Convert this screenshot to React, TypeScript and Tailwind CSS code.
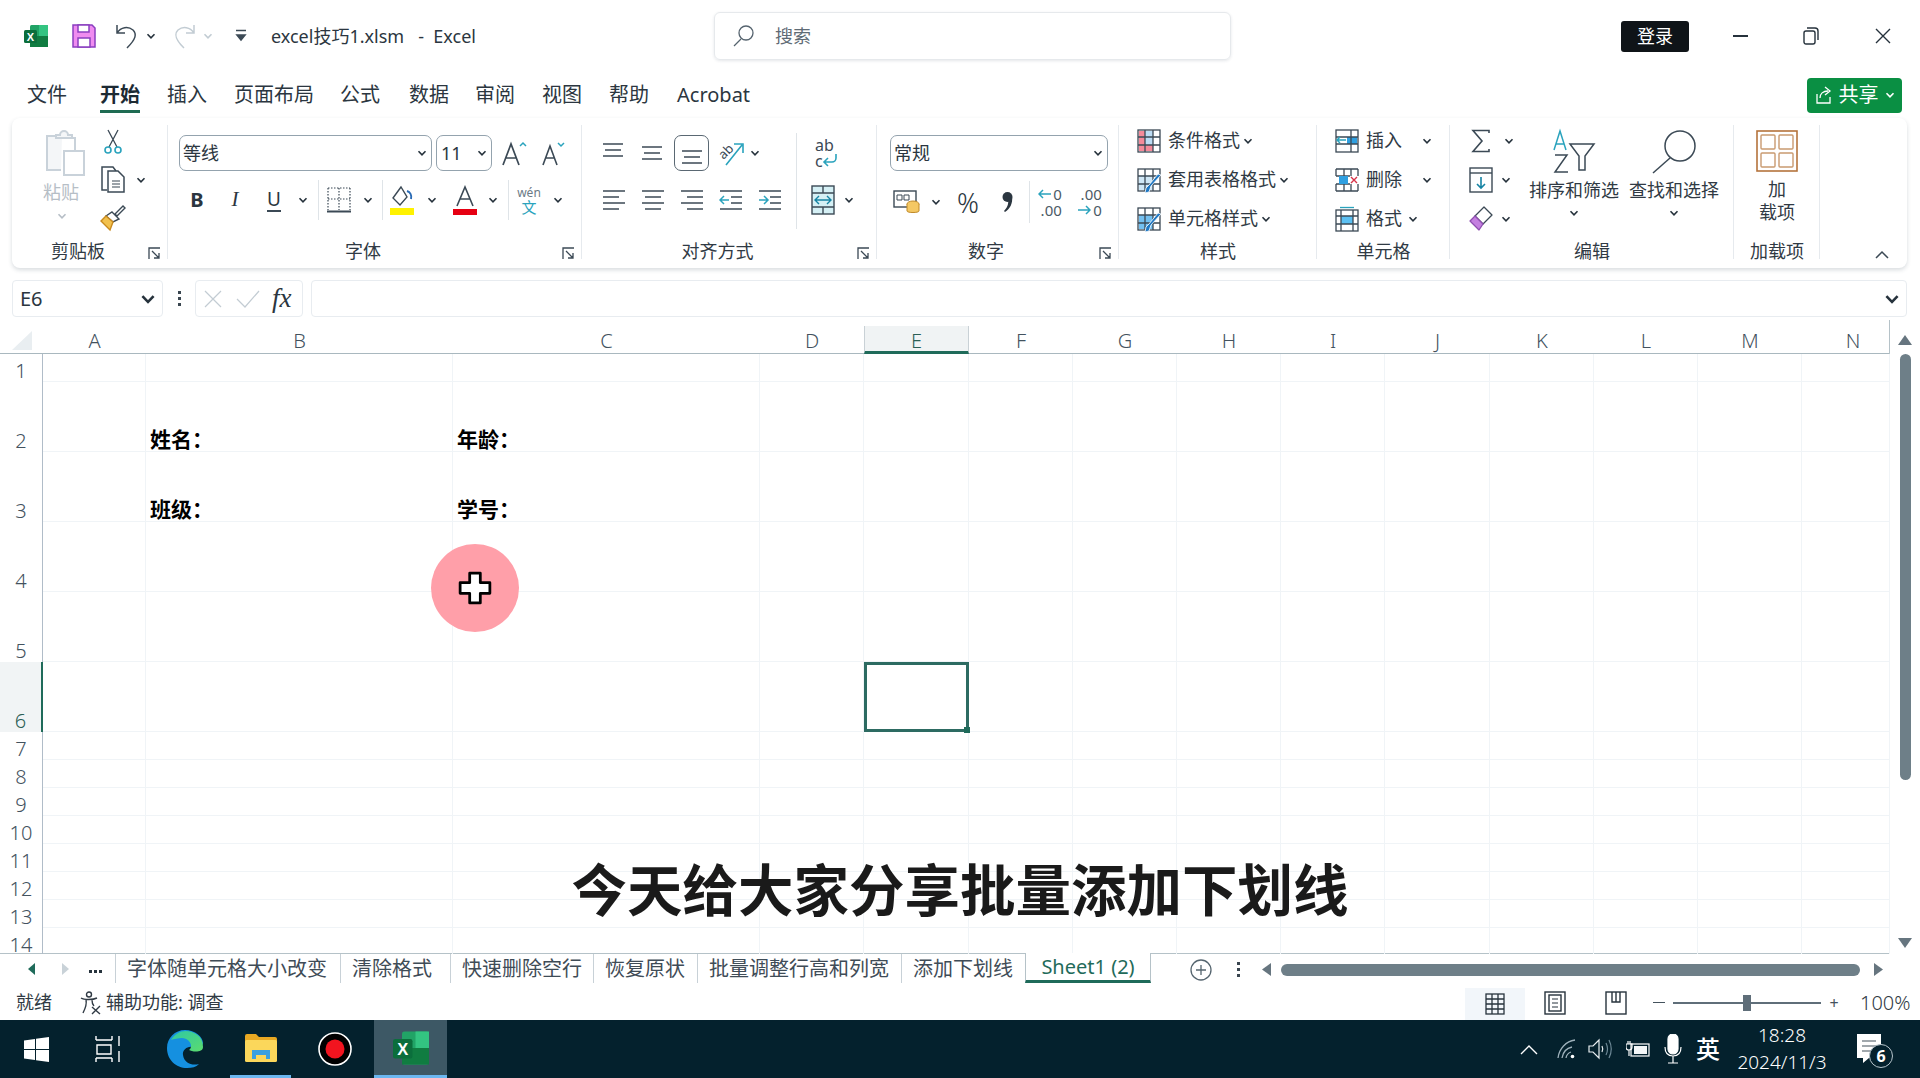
import type { ReactNode } from "react";

const ink = "#3b4955";
const teal = "#2aa3bd";

const colWidths = [43, 103, 307, 307, 104, 105, 104, 104, 104, 104, 105, 104, 104, 104, 88];
const colNames = ["", "A", "B", "C", "D", "E", "F", "G", "H", "I", "J", "K", "L", "M", "N"];
const rowHeights = [28, 70, 70, 70, 70, 70, 28, 28, 28, 28, 28, 28, 28, 28];
const tabs = [
  { name: "字体随单元格大小改变", w: "w-[225px]" },
  { name: "清除格式", w: "w-[110px]" },
  { name: "快速删除空行", w: "w-[143px]" },
  { name: "恢复原状", w: "w-[104px]" },
  { name: "批量调整行高和列宽", w: "w-[204px]" },
  { name: "添加下划线", w: "w-[124px]" },
];
const menus = [
  { name: "文件", ml: "ml-[27px]" },
  { name: "开始", ml: "ml-[33px]", active: true },
  { name: "插入", ml: "ml-[27px]" },
  { name: "页面布局", ml: "ml-[27px]" },
  { name: "公式", ml: "ml-[26px]" },
  { name: "数据", ml: "ml-[29px]" },
  { name: "审阅", ml: "ml-[26px]" },
  { name: "视图", ml: "ml-[27px]" },
  { name: "帮助", ml: "ml-[27px]" },
  { name: "Acrobat", ml: "ml-[28px]" },
];

function Slot({ w, children }: { w: string; children?: ReactNode }) {
  return <div className={`${w} flex shrink-0 items-center justify-center`}>{children}</div>;
}

function Chev({ color = "#26323c", size = 10 }: { color?: string; size?: number }) {
  return (
    <svg width={size} height={size} viewBox="0 0 10 10" fill="none" stroke={color} strokeWidth="1.6">
      <path d="M1.5 3.2 5 6.8l3.5-3.6" />
    </svg>
  );
}

function Launcher() {
  return (
    <svg width="13" height="13" viewBox="0 0 13 13" fill="none" stroke={ink} strokeWidth="1.3">
      <path d="M1 12V1h11" />
      <path d="M4 4l7 7M11 6v5H6" />
    </svg>
  );
}

function ExcelLogo({ size = 24 }: { size?: number }) {
  return (
    <svg width={size} height={size} viewBox="0 0 24 24">
      <rect x="6" y="1" width="18" height="22" rx="1.5" fill="#21a366" />
      <rect x="15" y="1" width="9" height="11" fill="#33c481" />
      <rect x="6" y="12" width="18" height="11" fill="#107c41" />
      <rect x="0" y="6" width="13" height="13" rx="1.5" fill="#0b6e3c" />
      <text x="6.5" y="16.5" textAnchor="middle" fontSize="11" fontWeight="700" fill="#fff" fontFamily="Liberation Sans">X</text>
    </svg>
  );
}

function AlignLines({ rows }: { rows: [number, number, number][] }) {
  return (
    <svg width="24" height="26" viewBox="0 0 24 26" stroke={ink} strokeWidth="1.5">
      {rows.map(([y, a, b]) => (
        <line key={y} x1={a} x2={b} y1={y} y2={y} />
      ))}
    </svg>
  );
}

function Group({
  w,
  label,
  launcher,
  children,
}: {
  w: string;
  label?: string;
  launcher?: boolean;
  children: ReactNode;
}) {
  return (
    <div className={`${w} relative flex h-full shrink-0 flex-col`}>
      <div className="h-[120px] shrink-0">{children}</div>
      {label && (
        <div className={launcher ? "pr-[24px] text-center text-[18px] leading-[26px] text-[#303a44]" : "text-center text-[18px] leading-[26px] text-[#303a44]"}>
          {label}
        </div>
      )}
      {launcher && (
        <div className="absolute right-[7px] bottom-[8px]">
          <Launcher />
        </div>
      )}
      <div className="absolute top-[7px] right-0 bottom-[9px] w-px bg-[#e6eaee]" />
    </div>
  );
}

function Select({ w, text, small }: { w: string; text: string; small?: boolean }) {
  return (
    <div className={`${w} flex h-[36px] shrink-0 items-center justify-between rounded-[7px] border border-[#94a3ae] pr-[4px] pl-[3px] text-[18px] text-[#2b3640]`}>
      <span className={small ? "pl-[1px]" : ""}>{text}</span>
      <Chev />
    </div>
  );
}

function StyleRow({ icon, text, chevMl }: { icon: ReactNode; text: string; chevMl: string }) {
  return (
    <div className="flex h-[39px] items-center text-[18px] text-[#303a44]">
      <div className="w-[24px] shrink-0">{icon}</div>
      <span className="ml-[7px] whitespace-nowrap">{text}</span>
      <div className={chevMl}>
        <Chev />
      </div>
    </div>
  );
}

function TableIcon({ fill, cond, brush }: { fill: string; cond?: boolean; brush?: boolean }) {
  return (
    <svg width="24" height="26" viewBox="0 0 24 26" fill="none" stroke={ink} strokeWidth="1.3">
      <rect x="1" y="2" width="22" height="22" />
      {cond ? (
        <>
          <path d="M2 3h6v20H2zM8 17h8v6H8z" fill="#f48a9a" stroke="none" />
          <rect x="8" y="3" width="8" height="14" fill="#bcdcf4" stroke="none" />
        </>
      ) : (
        <rect x="2" y="9" width="14" height="14" fill={fill} stroke="none" />
      )}
      <path d="M1 9h22M1 17h22M8 2v22M16 2v22" />
      {brush && <path d="M24 8 14 19l-2 6-4 1 1-5 3-3 9-11z" fill="#1f78c4" stroke="#fff" strokeWidth="0.8" />}
    </svg>
  );
}

function Ribbon() {
  return (
    <div className="mx-[12px] flex h-[150px] w-[1895px] rounded-[8px] bg-white shadow-[0_2px_4px_rgba(40,60,80,0.18)]">
      <Group w="w-[156px]" label="剪贴板" launcher>
        <div className="flex pl-[28px]">
          <div className="flex w-[50px] flex-col items-center pt-[12px] text-[18px] leading-[22px] text-[#b6bec6]">
            <svg width="42" height="46" viewBox="0 0 42 46" fill="none" stroke="#c9d2da" strokeWidth="2">
              <path d="M18 6h-15v34h14" fill="#f4f6f8" />
              <path d="M12 8V5h4a4 4 0 0 1 8 0h4v3z" fill="#f4f6f8" />
              <path d="M28 8h3v13" />
              <rect x="20" y="21" width="20" height="24" fill="#fff" />
            </svg>
            <span className="mt-[5px] -ml-[8px]">粘贴</span>
            <div className="mt-[8px] -ml-[6px]">
              <Chev color="#b6bec6" />
            </div>
          </div>
          <div className="ml-[10px] flex flex-col pt-[5px]">
            <div className="flex h-[38px] w-[26px] items-center justify-center">
              <svg width="18" height="26" viewBox="0 0 18 26" fill="none" stroke={ink} strokeWidth="1.3">
                <path d="M4 1l9 17M14 1 5 18" />
                <circle cx="4" cy="21" r="3" stroke={teal} strokeWidth="1.6" />
                <circle cx="14" cy="21" r="3" stroke={teal} strokeWidth="1.6" />
              </svg>
            </div>
            <div className="flex h-[38px] items-center">
              <div className="flex w-[26px] justify-center">
                <svg width="26" height="28" viewBox="0 0 26 28" fill="none" stroke={ink} strokeWidth="1.5">
                  <path d="M7 24H2V1h11l3 4" />
                  <path d="M8 5h10l6 6v15H8z" fill="#fff" />
                  <path d="M12 15h8M12 18h8M12 21h8" strokeWidth="1.1" />
                </svg>
              </div>
              <div className="ml-[10px]">
                <Chev />
              </div>
            </div>
            <div className="flex h-[38px] w-[26px] items-center justify-center">
              <svg width="26" height="28" viewBox="0 0 26 28">
                <path d="M15 10 23 2l2 2-8 8z" fill="#fff" stroke={ink} strokeWidth="1.4" />
                <path d="M12 8l7 7-6 3-7-6z" fill="#fff" stroke={ink} strokeWidth="1.4" />
                <path d="M6 12l7 6-3 8-9-9z" fill="#f2c14e" stroke="#c98a1e" strokeWidth="1.4" />
              </svg>
            </div>
          </div>
        </div>
      </Group>

      <Group w="w-[414px]" label="字体" launcher>
        <div className="flex items-center pt-[17px] pl-[11px]">
          <Select w="w-[253px]" text="等线" />
          <div className="ml-[4px]">
            <Select w="w-[56px]" text="11" small />
          </div>
          <Slot w="ml-[5px] w-[34px]">
            <svg width="30" height="30" viewBox="0 0 30 30" fill="none">
              <path d="M4 27 12 6l8 21M7 20h10" stroke={ink} strokeWidth="1.7" />
              <path d="M21 8l3-3 3 3" stroke={teal} strokeWidth="1.5" />
            </svg>
          </Slot>
          <Slot w="ml-[5px] w-[34px]">
            <svg width="26" height="30" viewBox="0 0 26 30" fill="none">
              <path d="M3 27l7-19 7 19M6 20h8" stroke={ink} strokeWidth="1.6" />
              <path d="M18 5l3 3 3-3" stroke={teal} strokeWidth="1.5" />
            </svg>
          </Slot>
        </div>
        <div className="mt-[11px] flex h-[36px] items-center pl-[11px]">
          <Slot w="w-[36px]">
            <span className="text-[20px] font-bold text-[#2b3640]">B</span>
          </Slot>
          <Slot w="ml-[2px] w-[36px]">
            <span className="font-['Liberation_Serif',serif] text-[21px] text-[#2b3640] italic">I</span>
          </Slot>
          <Slot w="ml-[3px] w-[36px]">
            <span className="border-b-2 border-[#3b4955] text-[19px] leading-[22px] text-[#2b3640]">U</span>
          </Slot>
          <Slot w="ml-px w-[20px]">
            <Chev />
          </Slot>
          <div className="ml-[5px] h-[40px] w-px shrink-0 bg-[#dfe4e8]" />
          <Slot w="ml-[4px] w-[32px]">
            <svg width="24" height="28" viewBox="0 0 24 28" fill="none" stroke={ink}>
              <path d="M1 2h22M1 2v22M23 2v22M12 2v22M1 13h22" strokeWidth="1.2" strokeDasharray="1.5 1.5" />
              <path d="M0 25.500h24" strokeWidth="2" />
            </svg>
          </Slot>
          <Slot w="ml-[3px] w-[20px]">
            <Chev />
          </Slot>
          <div className="ml-[4px] h-[40px] w-px shrink-0 bg-[#dfe4e8]" />
          <Slot w="ml-[4px] w-[32px]">
            <svg width="26" height="30" viewBox="0 0 26 30" fill="none">
              <path d="M11 2l-8 11 7 7 7-8z" stroke={ink} strokeWidth="1.4" />
              <path d="M17 6c3 1 5 4 4 8" stroke="#2a6bb5" strokeWidth="2" />
              <rect x="0" y="23" width="24" height="7" fill="#fff200" />
            </svg>
          </Slot>
          <Slot w="ml-[3px] w-[20px]">
            <Chev />
          </Slot>
          <Slot w="ml-[7px] w-[32px]">
            <svg width="26" height="30" viewBox="0 0 26 30" fill="none">
              <path d="M5 21 13 2l8 19M8 14h10" stroke={ink} strokeWidth="1.6" />
              <rect x="1" y="24" width="24" height="6" fill="#e60012" />
            </svg>
          </Slot>
          <Slot w="ml-[2px] w-[20px]">
            <Chev />
          </Slot>
          <div className="ml-[5px] h-[40px] w-px shrink-0 bg-[#dfe4e8]" />
          <Slot w="ml-[4px] w-[32px]">
            <div className="flex flex-col items-center text-[12px] leading-[14px] text-[#6b7a86]">
              <span>wén</span>
              <span className="text-[15px] text-[#2aa3bd]">文</span>
            </div>
          </Slot>
          <Slot w="ml-[3px] w-[20px]">
            <Chev />
          </Slot>
        </div>
      </Group>

      <Group w="w-[295px]" label="对齐方式" launcher>
        <div className="flex">
          <div className="w-[214px] shrink-0 pt-[17px]">
            <div className="flex h-[36px] items-center">
              <Slot w="ml-[13px] w-[36px]">
                <AlignLines rows={[[4, 2, 22], [10, 4, 20], [16, 2, 22]]} />
              </Slot>
              <Slot w="ml-[3px] w-[36px]">
                <AlignLines rows={[[7, 2, 22], [13, 4, 20], [19, 2, 22]]} />
              </Slot>
              <div className="ml-[4px] flex h-[36px] w-[35px] shrink-0 items-center justify-center rounded-[7px] border border-[#5a6873]">
                <AlignLines rows={[[11, 2, 22], [17, 4, 20], [23, 2, 22]]} />
              </div>
              <Slot w="ml-[6px] w-[32px]">
                <svg width="32" height="32" viewBox="0 0 32 32" fill="none">
                  <text x="4" y="20" fontSize="13" fill={ink} transform="rotate(-45 10 16)" fontFamily="Noto Sans">ab</text>
                  <path d="M11 28 27 8M19 7h9v9" stroke={teal} strokeWidth="1.6" />
                </svg>
              </Slot>
              <Slot w="w-[16px]">
                <Chev />
              </Slot>
            </div>
            <div className="mt-[11px] flex h-[36px] items-center pl-[12px]">
              <Slot w="w-[39px]">
                <AlignLines rows={[[4, 1, 23], [10, 1, 17], [16, 1, 23], [22, 1, 17]]} />
              </Slot>
              <Slot w="w-[39px]">
                <AlignLines rows={[[4, 1, 23], [10, 4, 20], [16, 1, 23], [22, 4, 20]]} />
              </Slot>
              <Slot w="w-[39px]">
                <AlignLines rows={[[4, 1, 23], [10, 7, 23], [16, 1, 23], [22, 7, 23]]} />
              </Slot>
              <Slot w="w-[39px]">
                <svg width="24" height="26" viewBox="0 0 24 26" fill="none">
                  <path d="M1 4h22M12 10h11M12 16h11M1 22h22" stroke={ink} strokeWidth="1.5" />
                  <path d="M10 13H1M5 9l-4 4 4 4" stroke={teal} strokeWidth="1.5" />
                </svg>
              </Slot>
              <Slot w="w-[39px]">
                <svg width="24" height="26" viewBox="0 0 24 26" fill="none">
                  <path d="M1 4h22M12 10h11M12 16h11M1 22h22" stroke={ink} strokeWidth="1.5" />
                  <path d="M1 13h9M6 9l4 4-4 4" stroke={teal} strokeWidth="1.5" />
                </svg>
              </Slot>
            </div>
          </div>
          <div className="mt-[15px] h-[96px] w-px shrink-0 bg-[#dfe4e8]" />
          <div className="w-[60px] shrink-0 pt-[17px]">
            <div className="flex h-[36px] items-center justify-center pr-[7px]">
              <svg width="30" height="36" viewBox="0 0 30 36" fill="none">
                <text x="6" y="16" fontSize="16" fill={ink} fontFamily="Noto Sans">ab</text>
                <text x="6" y="32" fontSize="16" fill={ink} fontFamily="Noto Sans">c</text>
                <path d="M27 19v4a4 4 0 0 1-4 4h-7M19 23l-4 4 4 4" stroke={teal} strokeWidth="1.6" />
              </svg>
            </div>
            <div className="mt-[11px] flex h-[36px] items-center pl-[14px]">
              <svg width="24" height="30" viewBox="0 0 24 30" fill="none" stroke={ink} strokeWidth="1.4">
                <rect x="1" y="1" width="22" height="28" fill="#d5f0f5" />
                <path d="M1 8h22M1 22h22M12 1v7M12 22v7" />
                <path d="M4 15h16M8 11l-4 4 4 4M16 11l4 4-4 4" stroke="#1583a3" />
              </svg>
              <div className="ml-[9px]">
                <Chev />
              </div>
            </div>
          </div>
        </div>
      </Group>

      <Group w="w-[242px]" label="数字" launcher>
        <div className="pt-[17px] pl-[13px]">
          <Select w="w-[218px]" text="常规" />
        </div>
        <div className="mt-[11px] flex h-[40px] items-center pl-[3px]">
          <Slot w="ml-[13px] w-[28px]">
            <svg width="28" height="26" viewBox="0 0 28 26" fill="none">
              <rect x="1" y="2" width="22" height="16" fill="#fff" stroke={ink} strokeWidth="1.4" />
              <path d="M4 6h5v5H4zM11 6h5v5h-5z" stroke={ink} strokeWidth="1" />
              <ellipse cx="20" cy="15" rx="6" ry="3" fill="#f4c864" stroke="#c08a28" />
              <path d="M14 15v7c0 2 12 2 12 0v-7" fill="#f4c864" stroke="#c08a28" />
            </svg>
          </Slot>
          <Slot w="ml-[8px] w-[14px]">
            <Chev />
          </Slot>
          <Slot w="ml-[7px] w-[36px]">
            <span className="text-[27px] leading-none font-light text-[#2b3640]">%</span>
          </Slot>
          <Slot w="ml-[4px] w-[36px]">
            <svg width="12" height="22" viewBox="0 0 12 22" fill="#2b3640">
              <circle cx="5.500" cy="6" r="5" />
              <path d="M10 6c1 6-2 12-7 15l-1-1c3-3 5-7 4-12z" />
            </svg>
          </Slot>
          <div className="ml-[3px] h-[42px] w-px shrink-0 bg-[#dfe4e8]" />
          <Slot w="ml-[2px] w-[36px]">
            <div className="flex flex-col items-end text-[15px] leading-[16px] text-[#4b5a66]">
              <div className="flex items-center gap-[2px]">
                <svg width="13" height="10" viewBox="0 0 13 10" fill="none" stroke={teal} strokeWidth="1.5">
                  <path d="M13 5H1M5 1 1 5l4 4" />
                </svg>
                <span>0</span>
              </div>
              <span>.00</span>
            </div>
          </Slot>
          <Slot w="ml-[4px] w-[36px]">
            <div className="flex flex-col items-end text-[15px] leading-[16px] text-[#4b5a66]">
              <span>.00</span>
              <div className="flex items-center gap-[2px]">
                <svg width="13" height="10" viewBox="0 0 13 10" fill="none" stroke={teal} strokeWidth="1.5">
                  <path d="M0 5h12M8 1l4 4-4 4" />
                </svg>
                <span>0</span>
              </div>
            </div>
          </Slot>
        </div>
      </Group>

      <Group w="w-[198px]" label="样式">
        <div className="pt-[3px] pl-[18px]">
          <StyleRow icon={<TableIcon fill="#f48a9a" cond />} text="条件格式" chevMl="ml-[3px]" />
          <StyleRow icon={<TableIcon fill="#cfe7f6" brush />} text="套用表格格式" chevMl="ml-[3px]" />
          <StyleRow icon={<TableIcon fill="#74c0f0" brush />} text="单元格样式" chevMl="ml-[3px]" />
        </div>
      </Group>

      <Group w="w-[133px]" label="单元格">
        <div className="pt-[3px] pl-[18px]">
          <StyleRow
            icon={
              <svg width="24" height="24" viewBox="0 0 24 24" fill="none" stroke={ink} strokeWidth="1.3">
                <rect x="1" y="1" width="22" height="22" />
                <rect x="12" y="8" width="10" height="7" fill="#2f9fe0" stroke="none" />
                <path d="M1 8h22M1 15h22M16 1v22" />
                <path d="M11 11H2M5 8l-3 3 3 3" stroke={teal} strokeWidth="1.5" />
              </svg>
            }
            text="插入"
            chevMl="ml-[20px]"
          />
          <StyleRow
            icon={
              <svg width="24" height="24" viewBox="0 0 24 24" fill="none" stroke={ink} strokeWidth="1.3">
                <path d="M1 1h22M1 23h22M1 1v7M1 16v7M9 1v7M9 16v7M16 1v7M16 16v7M23 1v7M23 16v7M1 8h14M1 16h14" />
                <rect x="4" y="8" width="9" height="8" fill="#2f9fe0" stroke="none" />
                <path d="M16 9l6 6M22 9l-6 6" stroke="#d8344a" strokeWidth="1.4" />
              </svg>
            }
            text="删除"
            chevMl="ml-[20px]"
          />
          <StyleRow
            icon={
              <svg width="24" height="26" viewBox="0 0 24 26" fill="none" stroke={ink} strokeWidth="1.3">
                <path d="M5 1.500h14" stroke={teal} />
                <rect x="1" y="4" width="22" height="21" />
                <rect x="6" y="10" width="12" height="8" fill="#5cc0f2" stroke="none" />
                <path d="M1 10h22M1 18h22M6 4v21M18 4v21" />
              </svg>
            }
            text="格式"
            chevMl="ml-[6px]"
          />
        </div>
      </Group>

      <Group w="w-[284px]" label="编辑">
        <div className="flex">
          <div className="w-[79px] shrink-0 pt-[3px] pl-[15px]">
            <div className="flex h-[39px] items-center">
              <Slot w="w-[32px]">
                <svg width="20" height="24" viewBox="0 0 20 24" fill="none" stroke={ink} strokeWidth="1.6">
                  <path d="M18 4V1.500H2L11 12 2 22.500h16V20" />
                </svg>
              </Slot>
              <Slot w="ml-[5px] w-[14px]">
                <Chev />
              </Slot>
            </div>
            <div className="flex h-[39px] items-center">
              <Slot w="w-[32px]">
                <svg width="24" height="26" viewBox="0 0 24 26" fill="none" stroke={ink} strokeWidth="1.4">
                  <rect x="1" y="1" width="22" height="24" />
                  <path d="M1 6h22" />
                  <path d="M12 10v11M8 17l4 4 4-4" stroke="#1583a3" strokeWidth="1.6" />
                </svg>
              </Slot>
              <Slot w="ml-[2px] w-[14px]">
                <Chev />
              </Slot>
            </div>
            <div className="flex h-[39px] items-center">
              <Slot w="w-[32px]">
                <svg width="24" height="26" viewBox="0 0 24 26" strokeLinejoin="round">
                  <path d="M15 1l8 8-9 9-8-8z" fill="#fff" stroke={ink} strokeWidth="1.3" />
                  <path d="M6 10l8 8-4 6-9-9z" fill="#c47fe0" stroke="#8e4eb0" strokeWidth="1.3" />
                </svg>
              </Slot>
              <Slot w="ml-[2px] w-[14px]">
                <Chev />
              </Slot>
            </div>
          </div>
          <div className="flex w-[90px] shrink-0 flex-col items-center pt-[10px] text-[18px] leading-[22px] whitespace-nowrap text-[#303a44]">
            <svg width="44" height="46" viewBox="0 0 44 46" fill="none">
              <path d="M2 22 8 3l6 19M4 16h8" stroke={teal} strokeWidth="1.5" />
              <path d="M3 27h12L3 44h13" stroke={ink} strokeWidth="1.5" />
              <path d="M18 16h24l-9 12v14h-6V28z" stroke={ink} strokeWidth="1.5" />
            </svg>
            <span className="mt-[5px]">排序和筛选</span>
            <div className="mt-[7px]">
              <Chev />
            </div>
          </div>
          <div className="ml-[10px] flex w-[90px] shrink-0 flex-col items-center pt-[12px] text-[18px] leading-[22px] whitespace-nowrap text-[#303a44]">
            <svg width="46" height="44" viewBox="0 0 46 44" fill="none" stroke={ink} strokeWidth="1.5">
              <ellipse cx="29" cy="16" rx="15" ry="15" />
              <path d="M19 28 2 43" />
            </svg>
            <span className="mt-[5px]">查找和选择</span>
            <div className="mt-[7px]">
              <Chev />
            </div>
          </div>
        </div>
      </Group>

      <Group w="w-[86px]" label="加载项">
        <div className="flex flex-col items-center pt-[12px] text-[18px] leading-[23px] text-[#303a44]">
          <svg width="42" height="42" viewBox="0 0 42 42" fill="none">
            <rect x="1" y="1" width="40" height="40" stroke="#b5733c" strokeWidth="1.6" />
            <rect x="5" y="5" width="14" height="14" rx="1" stroke="#c99a70" strokeWidth="1.4" />
            <rect x="23" y="5" width="14" height="14" rx="1" stroke="#c99a70" strokeWidth="1.4" />
            <rect x="5" y="23" width="14" height="14" rx="1" stroke="#c99a70" strokeWidth="1.4" />
            <rect x="23" y="23" width="14" height="14" rx="1" stroke="#c99a70" strokeWidth="1.4" />
          </svg>
          <span className="mt-[6px]">加</span>
          <span>载项</span>
        </div>
      </Group>

      <div className="flex flex-1 items-end justify-end pr-[18px] pb-[9px]">
        <svg width="14" height="9" viewBox="0 0 14 9" fill="none" stroke={ink} strokeWidth="1.5">
          <path d="M1 8l6-6 6 6" />
        </svg>
      </div>
    </div>
  );
}

function Sheet() {
  return (
    <div className="mt-[3px] flex h-[634px] shrink-0 overflow-hidden">
      <div className="w-[1890px] shrink-0 border-r border-b border-[#b5c2c8]">
        <div className="flex h-[34px] items-end border-b border-[#a9b8bf] text-[20px] leading-[24px] font-light text-[#43525e]">
          {colNames.map((name, c) => (
            <div
              key={c}
              style={{ width: colWidths[c] }}
              className={
                name === "E"
                  ? "-mb-px flex h-[28px] shrink-0 items-center justify-center border-x border-b-[3px] border-x-[#c9d1d6] border-b-[#1f6b5a] bg-[#f0f3f4] pt-[5px] text-[#2b5f55]"
                  : name === "N"
                    ? "flex h-[26px] shrink-0 items-center justify-center pt-[2px] pl-[14px]"
                    : c === 0
                      ? "flex h-[24px] shrink-0 items-center justify-center"
                      : "flex h-[26px] shrink-0 items-center justify-center pt-[2px]"
              }
            >
              {c === 0 ? (
                <svg width="22" height="20" viewBox="0 0 22 20" className="ml-[2px]">
                  <path d="M20 0v19H0z" fill="#e9eef1" />
                </svg>
              ) : (
                name
              )}
            </div>
          ))}
        </div>
        {rowHeights.map((h, r) => (
          <div key={r} style={{ height: h }} className="flex overflow-visible">
            {colWidths.map((w, c) => {
              const selected = r === 5 && c === 5;
              const rowHead = c === 0;
              let text = "";
              if (r === 1 && c === 2) text = "姓名：";
              if (r === 1 && c === 3) text = "年龄：";
              if (r === 2 && c === 2) text = "班级：";
              if (r === 2 && c === 3) text = "学号：";
              return (
                <div
                  key={c}
                  style={{ width: w }}
                  className={
                    rowHead
                      ? r === 5
                        ? "flex shrink-0 items-end justify-center border-r-[2px] border-r-[#1f6b5a] bg-[#f1f4f5] text-[20px] leading-[23px] font-light text-[#2b5f55]"
                        : "flex shrink-0 items-end justify-center border-r border-r-[#b0bcc8] text-[20px] leading-[23px] font-light text-[#43525e]"
                      : selected
                        ? "relative shrink-0 border-[3px] border-[#2d6b62]"
                        : "flex shrink-0 items-end border-r border-b border-[#f0f4f7] pl-[4px] text-[21px] leading-[24px] font-bold text-black"
                  }
                >
                  {rowHead ? r + 1 : text}
                  {selected && (
                    <div className="absolute -right-[4px] -bottom-[4px] h-[6px] w-[6px] bg-[#1f6b5a]" />
                  )}
                </div>
              );
            })}
          </div>
        ))}
      </div>
      <div className="relative flex-1">
        <div className="flex h-[34px] items-start justify-center pt-[15px]">
          <svg width="14" height="10" viewBox="0 0 14 10" fill="#66757f">
            <path d="M7 0l7 10H0z" />
          </svg>
        </div>
        <div className="mx-auto h-[426px] w-[11px] rounded-full bg-[#6e7f88]" />
        <div className="absolute right-[8px] bottom-[6px]">
          <svg width="14" height="10" viewBox="0 0 14 10" fill="#66757f">
            <path d="M7 10 0 0h14z" />
          </svg>
        </div>
      </div>
    </div>
  );
}

function SheetTabs() {
  return (
    <div className="flex h-[31px] shrink-0 text-[20px] text-[#3f4c57]">
      <div className="flex h-[29px] w-[115px] shrink-0 items-center">
        <Slot w="ml-[22px] w-[20px]">
          <svg width="8" height="12" viewBox="0 0 8 12" fill="#1f6b5a">
            <path d="M7 0v12L0 6z" />
          </svg>
        </Slot>
        <Slot w="ml-[13px] w-[20px]">
          <svg width="8" height="12" viewBox="0 0 8 12" fill="#c9d2d8">
            <path d="M1 0v12l7-6z" />
          </svg>
        </Slot>
        <span className="ml-[14px] flex gap-[2px] pt-[6px]">
          <span className="h-[3px] w-[3px] bg-[#27333d]" />
          <span className="h-[3px] w-[3px] bg-[#27333d]" />
          <span className="h-[3px] w-[3px] bg-[#27333d]" />
        </span>
      </div>
      {tabs.map((t) => (
        <div key={t.name} className={`${t.w} flex h-[29px] shrink-0 items-center justify-start overflow-hidden border-l border-[#c8d1d7] pl-[11px] whitespace-nowrap`}>
          {t.name}
        </div>
      ))}
      <div className="-mt-px flex h-[30px] w-[126px] shrink-0 items-center justify-center border-x border-b-[3px] border-x-[#b5c2c8] border-b-[#1f6b5a] bg-white text-[#1f6b5a]">
        Sheet1 (2)
      </div>
      <div className="flex h-[31px] flex-1 items-center">
        <Slot w="ml-[38px] w-[24px]">
          <svg width="22" height="22" viewBox="0 0 22 22" fill="none" stroke="#55656f" strokeWidth="1.3">
            <circle cx="11" cy="11" r="10" />
            <path d="M11 6v10M6 11h10" />
          </svg>
        </Slot>
        <Slot w="ml-[13px] w-[24px]">
          <span className="flex flex-col gap-[3px]">
            <span className="h-[3px] w-[3px] bg-[#3a4650]" />
            <span className="h-[3px] w-[3px] bg-[#3a4650]" />
            <span className="h-[3px] w-[3px] bg-[#3a4650]" />
          </span>
        </Slot>
        <Slot w="ml-[6px] w-[20px]">
          <svg width="9" height="13" viewBox="0 0 9 13" fill="#66757f">
            <path d="M9 0v13L0 6.500z" />
          </svg>
        </Slot>
        <div className="ml-[5px] h-[12px] w-[579px] shrink-0 rounded-full bg-[#6e7f88]" />
        <Slot w="ml-[8px] w-[20px]">
          <svg width="9" height="13" viewBox="0 0 9 13" fill="#66757f">
            <path d="M0 0v13l9-6.500z" />
          </svg>
        </Slot>
      </div>
    </div>
  );
}

function StatusBar() {
  return (
    <div className="flex h-[35px] shrink-0 items-center text-[18px] text-[#303a44]">
      <span className="ml-[16px] w-[42px]">就绪</span>
      <svg width="22" height="24" viewBox="0 0 22 24" fill="none" stroke="#303a44" strokeWidth="1.4" className="ml-[22px]">
        <circle cx="9" cy="3.500" r="2.500" />
        <path d="M1 7c3 2 12 2 16 0M6 9c1 4 0 7-3 13M12 9c0 3 1 5 2 6M12 16l8 7M20 15l-8 8" />
      </svg>
      <span className="ml-[4px] w-[120px] whitespace-nowrap">辅助功能: 调查</span>
      <div className="ml-[1239px] flex h-[32px] w-[60px] shrink-0 items-center justify-center self-end bg-[#f2f6fa]">
        <svg width="20" height="22" viewBox="0 0 20 22" fill="none" stroke="#27333d" strokeWidth="1.3">
          <rect x="1" y="1" width="18" height="20" />
          <path d="M7 1v20M13 1v20M1 6h18M1 11h18M1 16h18" />
        </svg>
      </div>
      <Slot w="w-[60px]">
        <svg width="22" height="24" viewBox="0 0 22 24" fill="none" stroke="#27333d" strokeWidth="1.4">
          <rect x="1" y="1" width="20" height="22" />
          <rect x="5" y="4" width="12" height="16" />
          <path d="M8 8h6M8 12h6M8 16h6" strokeWidth="1" />
        </svg>
      </Slot>
      <Slot w="ml-px w-[60px]">
        <svg width="22" height="24" viewBox="0 0 22 24" fill="none" stroke="#27333d" strokeWidth="1.4">
          <rect x="1" y="1" width="20" height="22" />
          <path d="M7 1v10h8V1M11 1v10" />
        </svg>
      </Slot>
      <div className="ml-[7px] h-[1.500px] w-[12px] shrink-0 bg-[#44525d]" />
      <div className="relative ml-[8px] h-[2px] w-[148px] shrink-0 bg-[#5f6e79]">
        <div className="absolute top-[-7px] left-[70px] h-[16px] w-[8px] bg-[#5f6e79]" />
      </div>
      <Slot w="ml-[7px] w-[12px]">
        <span className="text-[16px] leading-none text-[#44525d]">+</span>
      </Slot>
      <span className="ml-[20px] text-[20px] font-light whitespace-nowrap text-[#303a44]">100%</span>
    </div>
  );
}

function Taskbar() {
  return (
    <div className="flex h-[58px] shrink-0 items-center bg-[#04212d] text-white">
      <Slot w="w-[72px]">
        <svg width="25" height="25" viewBox="0 0 25 25" fill="#fff">
          <path d="M0 3.500 11 2v10H0zM12 1.800 25 0v12H12zM0 13h11v10L0 21.500zM12 13h13v12l-13-1.800z" />
        </svg>
      </Slot>
      <Slot w="w-[72px]">
        <svg width="26" height="28" viewBox="0 0 26 28" fill="none" stroke="#fff" strokeWidth="1.4">
          <path d="M1 5h16M1 1v4M17 1v4M2 10h14v9H2zM1 23h16M1 23v4M17 23v4M24 1v10M24 16v11" />
        </svg>
      </Slot>
      <Slot w="ml-[10px] h-full w-[62px]">
        <svg width="36" height="38" viewBox="0 0 36 38">
          <defs>
            <linearGradient id="edgeA" x1="0" y1="0" x2="1" y2="1">
              <stop offset="0" stopColor="#2fc7a6" />
              <stop offset="1" stopColor="#5bdc6e" />
            </linearGradient>
          </defs>
          <path d="M18 0C8 0 0 8 0 18c0 12 9 20 20 20 5 0 9-1 12-4-7 2-15-1-16-9-.6-4 2-7 6-8 5-1 14 1 14-4C36 7 28 0 18 0z" fill="#1590e0" />
          <path d="M4 10C9 1 20-2 29 4c5 3 7 8 7 13 0 6-11 5-14 3 5-4 0-12-7-12-4 0-8 1-11 2z" fill="url(#edgeA)" />
        </svg>
      </Slot>
      <div className="ml-[14px] flex h-full w-[61px] shrink-0 items-center justify-center border-b-[3px] border-[#6bb7f0]">
        <svg width="32" height="30" viewBox="0 0 32 30">
          <path d="M0 3a2 2 0 0 1 2-2h9l3 3h16a2 2 0 0 1 2 2v6H0z" fill="#e9a923" />
          <rect x="0" y="7" width="32" height="22" rx="1.500" fill="#fbd75b" />
          <path d="M7 26V17h18v9h-4v-4H11v4z" fill="#3aa0e0" />
        </svg>
      </div>
      <Slot w="ml-[13px] w-[62px]">
        <svg width="34" height="34" viewBox="0 0 34 34">
          <circle cx="17" cy="17" r="16" fill="#000" stroke="#fff" strokeWidth="1.6" />
          <circle cx="17" cy="17" r="9.500" fill="#f2141f" />
        </svg>
      </Slot>
      <div className="ml-[8px] flex h-full w-[73px] shrink-0 items-center justify-center border-b-[3px] border-[#6bb7f0] bg-[#3d5865]">
        <ExcelLogo size={36} />
      </div>
      <Slot w="ml-[1065px] w-[34px]">
        <svg width="18" height="11" viewBox="0 0 18 11" fill="none" stroke="#fff" strokeWidth="1.4">
          <path d="M1 10l8-8 8 8" />
        </svg>
      </Slot>
      <Slot w="ml-[4px] w-[34px]">
        <svg width="20" height="20" viewBox="0 0 20 20" fill="none" stroke="#9fb2bc" strokeWidth="1.3">
          <path d="M1 19C2 10 9 2 18 1M5 19c1-6 5-10 10-11M9 19c.5-3 2-5 5-6" />
          <circle cx="15.500" cy="17.500" r="1.800" fill="#fff" stroke="none" />
        </svg>
      </Slot>
      <Slot w="w-[32px]">
        <svg width="24" height="22" viewBox="0 0 24 22" fill="none" stroke="#e8eef1" strokeWidth="1.2">
          <path d="M1 8h4l6-6v18l-6-6H1z" />
          <path d="M14 8c1 2 1 4 0 6" />
          <path d="M18 5c2 4 2 8 0 12M21 2c3 6 3 12 0 18" stroke="#6d8896" />
        </svg>
      </Slot>
      <Slot w="ml-[4px] w-[36px]">
        <svg width="24" height="18" viewBox="0 0 24 18" fill="none" stroke="#fff" strokeWidth="1.2">
          <rect x="5" y="4" width="18" height="12" />
          <rect x="8" y="6" width="13" height="8" fill="#f4f7f8" stroke="none" />
          <path d="M0 4h6v3c0 2-1 3-3 3S0 9 0 7zM2 1v3M4 1v3M3 10v6" />
        </svg>
      </Slot>
      <Slot w="w-[34px]">
        <svg width="18" height="30" viewBox="0 0 18 30" fill="none" stroke="#fff" strokeWidth="1.2">
          <rect x="4" y="0" width="10" height="20" rx="5" fill="#fff" />
          <path d="M1 13c0 6 3 9 8 9s8-3 8-9M9 22v7M4 29h10" />
        </svg>
      </Slot>
      <Slot w="w-[36px]">
        <span className="text-[24px] leading-none font-medium">英</span>
      </Slot>
      <div className="flex w-[112px] shrink-0 flex-col items-center text-[19px] leading-[27px] font-light">
        <span>18:28</span>
        <span>2024/11/3</span>
      </div>
      <div className="relative ml-[7px] flex w-[50px] shrink-0 justify-center">
        <svg width="26" height="30" viewBox="0 0 26 30">
          <path d="M0 0h24v24h-12l-6 5v-5H0z" fill="#fff" />
          <path d="M5 7h14M5 12h14M5 17h10" stroke="#44525d" strokeWidth="1.2" />
        </svg>
        <span className="absolute top-[10px] right-[2px] flex h-[24px] w-[24px] items-center justify-center rounded-full border border-[#b8c6cd] bg-[#04212d] text-[16px] font-bold">
          6
        </span>
      </div>
    </div>
  );
}

export default function App() {
  return (
    <div className="relative flex h-[1078px] w-[1920px] flex-col overflow-hidden bg-white font-['Noto_Sans','Noto_Sans_CJK_SC',sans-serif]">
      {/* title bar */}
      <div className="flex h-[72px] shrink-0 items-center">
        <div className="ml-[24px]">
          <ExcelLogo />
        </div>
        <svg width="24" height="24" viewBox="0 0 24 24" className="ml-[24px]" fill="none" stroke="#8a3fc0" strokeWidth="1.5">
          <path d="M1 1h19l3 3v19H1z" fill="#f08cf0" />
          <rect x="6" y="1" width="11" height="7" fill="#fff" />
          <rect x="6" y="14" width="12" height="9" fill="#fff" />
        </svg>
        <svg width="22" height="26" viewBox="0 0 22 26" className="ml-[20px]" fill="none" stroke="#3c4a56" strokeWidth="1.5">
          <path d="M1 2v8h8M1 10c4-6 11-7 16-3 4 4 3 9-6 18" />
        </svg>
        <div className="ml-[8px]">
          <Chev />
        </div>
        <svg width="22" height="26" viewBox="0 0 22 26" className="ml-[17px]" fill="none" stroke="#c2ccd3" strokeWidth="1.5">
          <path d="M21 2v8h-8M21 10c-4-6-11-7-16-3-4 4-3 9 6 18" />
        </svg>
        <div className="ml-[8px]">
          <Chev color="#c2ccd3" />
        </div>
        <svg width="12" height="14" viewBox="0 0 12 14" className="ml-[22px]" fill="none" stroke="#3c4a56" strokeWidth="1.600">
          <path d="M1 1.500h10M2 6l4 5 4-5z" fill="#3c4a56" />
        </svg>
        <div className="ml-[24px] w-[443px] shrink-0 text-[18px] whitespace-pre text-[#2b3640]">excel技巧1.xlsm   -  Excel</div>
        <div className="flex h-[48px] w-[517px] shrink-0 items-center rounded-[6px] border border-[#e6e9ec] shadow-[0_1px_3px_rgba(40,60,80,0.12)]">
          <svg width="22" height="22" viewBox="0 0 22 22" className="ml-[18px]" fill="none" stroke="#55636e" strokeWidth="1.3">
            <circle cx="13" cy="8" r="7" />
            <path d="M8 14 1 21" />
          </svg>
          <span className="ml-[20px] text-[18px] text-[#5f6b75]">搜索</span>
        </div>
        <div className="ml-[390px] flex h-[31px] w-[68px] shrink-0 items-center justify-center rounded-[3px] bg-[#0f1418] text-[18px] text-white">登录</div>
        <Slot w="ml-[26px] w-[50px]">
          <div className="h-[2px] w-[15px] bg-[#26323c]" />
        </Slot>
        <Slot w="ml-[21px] w-[50px]">
          <svg width="16" height="18" viewBox="0 0 16 18" fill="none" stroke="#26323c" strokeWidth="1.4">
            <rect x="1" y="4" width="11" height="13" rx="2" />
            <path d="M4 1h8a3 3 0 0 1 3 3v9" />
          </svg>
        </Slot>
        <Slot w="ml-[22px] w-[50px]">
          <svg width="16" height="16" viewBox="0 0 16 16" fill="none" stroke="#26323c" strokeWidth="1.4">
            <path d="M1 1l14 14M15 1 1 15" />
          </svg>
        </Slot>
      </div>

      {/* menu tabs */}
      <div className="flex h-[46px] shrink-0 items-center text-[20px] text-[#2b3640]">
        {menus.map((m) => (
          <div key={m.name} className={m.ml}>
            <div className={m.active ? "relative font-bold text-[#1c2a33]" : ""}>
              {m.name}
              {m.active && <div className="absolute inset-x-0 -bottom-[3px] h-[3px] bg-[#1e6b52]" />}
            </div>
          </div>
        ))}
        <div className="mr-[18px] ml-auto flex h-[35px] w-[95px] items-center justify-center gap-[6px] rounded-[4px] bg-[#0a8f43] text-white">
          <svg width="18" height="18" viewBox="0 0 18 18" fill="none" stroke="#fff" strokeWidth="1.3">
            <path d="M2 8v9h13v-6M5 12c0-4 3-7 8-7M10 1l5 4-5 4" />
          </svg>
          <span className="text-[20px] leading-none">共享</span>
          <Chev color="#fff" />
        </div>
      </div>

      <Ribbon />

      {/* formula bar */}
      <div className="mt-[12px] flex h-[37px] shrink-0">
        <div className="ml-[12px] flex w-[151px] shrink-0 items-center justify-between rounded-[4px] border border-[#e8ecf0] pr-[6px] pl-[7px] text-[20px] text-[#2b3640]">
          E6
          <Chev size={16} />
        </div>
        <Slot w="w-[32px]">
          <span className="flex flex-col gap-[3px]">
            <span className="h-[3px] w-[3px] bg-[#3a4650]" />
            <span className="h-[3px] w-[3px] bg-[#3a4650]" />
            <span className="h-[3px] w-[3px] bg-[#3a4650]" />
          </span>
        </Slot>
        <div className="flex w-[108px] shrink-0 items-center rounded-[4px] border border-[#e8ecf0]">
          <svg width="18" height="18" viewBox="0 0 18 18" className="ml-[8px]" fill="none" stroke="#c3ccd3" strokeWidth="1.2">
            <path d="M1 1l16 16M17 1 1 17" />
          </svg>
          <svg width="24" height="18" viewBox="0 0 24 18" className="ml-[14px]" fill="none" stroke="#c3ccd3" strokeWidth="1.2">
            <path d="M1 9l8 8L23 1" />
          </svg>
          <span className="ml-[12px] font-['Liberation_Serif',serif] text-[27px] leading-none text-[#2b3640] italic">fx</span>
        </div>
        <div className="ml-[8px] flex w-[1596px] shrink-0 items-center justify-end rounded-[4px] border border-[#e8ecf0] pr-[6px]">
          <Chev size={16} />
        </div>
      </div>

      <Sheet />
      <SheetTabs />
      <StatusBar />
      <Taskbar />

      {/* screen recording overlays */}
      <div className="absolute top-[544px] left-[431px] flex h-[88px] w-[88px] items-center justify-center rounded-full bg-[#ff9fa9]">
        <svg width="34" height="34" viewBox="0 0 32 32" fill="#fff" stroke="#000" strokeWidth="2.600" strokeLinejoin="round">
          <path d="M11 2h10v9h9v10h-9v9H11v-9H2V11h9z" />
        </svg>
      </div>
      <div className="absolute inset-x-0 top-[855px] text-center text-[55.5px] leading-[70px] font-bold text-[#1a1a1a]">今天给大家分享批量添加下划线</div>
    </div>
  );
}
